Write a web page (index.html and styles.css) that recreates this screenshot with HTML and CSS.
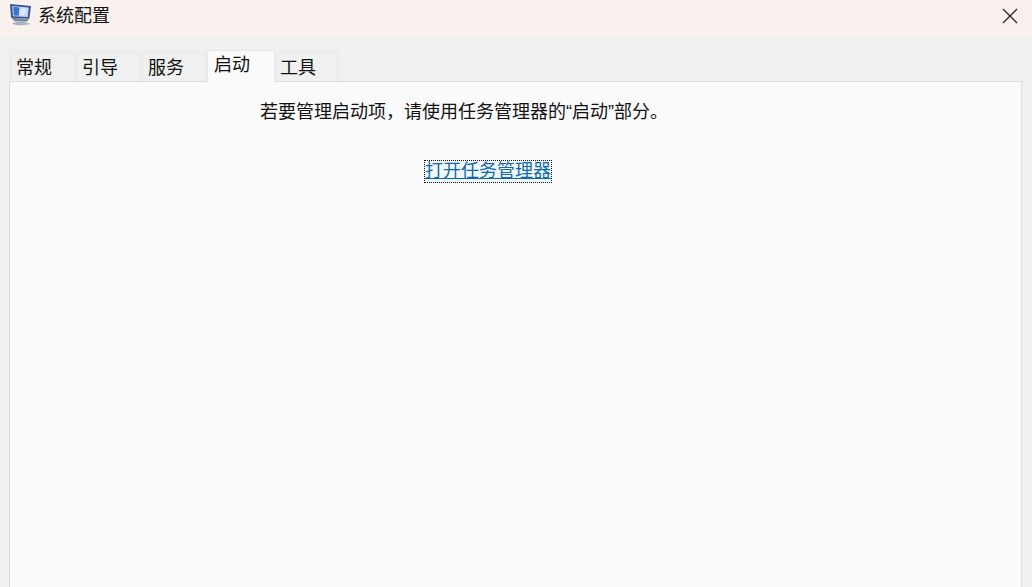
FILE: index.html
```html
<!DOCTYPE html>
<html lang="zh-CN">
<head>
    <meta charset="UTF-8">
    <meta name="viewport" content="width=device-width, initial-scale=1.0">
    <title>系统配置</title>
    <link rel="stylesheet" href="styles.css">
</head>
<body>
    <div class="titlebar">
        <svg class="app-icon" viewBox="3 1 19 23" preserveAspectRatio="none" xmlns="http://www.w3.org/2000/svg">
            <path d="M3 1 22 3 20.5 16.5 4 15.5z" fill="#33509c"/>
            <path d="M5 3 20 4.6 19 14.6 5.6 13.8z" fill="#c4d9f2"/>
            <path d="M6 4 11.5 4.6 10.8 13.2 6.4 13z" fill="#3a74c6"/>
            <path d="M12.8 7.2h4.6M12.6 9.6h4.6M12.4 12h3.4" stroke="#f7fafd" stroke-width="1.2"/>
            <path d="M4 15.5 20.5 16.5 18 19.5 7 19z" fill="#7f899e"/>
            <path d="M5 21C8 19 18 19.5 21 21.5 20 24 5 23.5 5 21z" fill="#aab1bf"/>
        </svg>
        <span class="title">系统配置</span>
        <svg class="close" viewBox="0 0 16 16" xmlns="http://www.w3.org/2000/svg">
            <path d="M1 1 15 15M15 1 1 15" stroke="#222" stroke-width="1.3" fill="none"/>
        </svg>
    </div>
    <div class="tabs">
        <div class="tab">常规</div>
        <div class="tab">引导</div>
        <div class="tab tab-narrow">服务</div>
        <div class="tab active">启动</div>
        <div class="tab tab-last">工具</div>
    </div>
    <div class="panel">
        <p class="message">若要管理启动项，请使用任务管理器的“启动”部分。</p>
        <a class="link" href="#">打开任务管理器</a>
    </div>
</body>
</html>
```

FILE: styles.css
```css
html, body {
    height: 100%;
}
body {
    margin: 0;
    display: flex;
    flex-direction: column;
    overflow: hidden;
    background: #f0f0f0;
    color: #111;
    font-family: "Liberation Sans", "Noto Sans CJK SC", sans-serif;
    font-size: 18px;
}
.titlebar {
    height: 38px;
    flex: none;
    display: flex;
    align-items: center;
    padding: 0 14px 6px 10px;
    box-sizing: border-box;
    background: #f9f1ee;
}
.app-icon {
    width: 21px;
    height: 22px;
    margin: -2px 7px 0 0;
}
.title {
    flex: 1;
    line-height: 24px;
}
.close {
    width: 16px;
    height: 16px;
}
.tabs {
    flex: none;
    display: flex;
    align-items: flex-end;
    gap: 1px;
    height: 43px;
    padding-left: 10px;
    position: relative;
    z-index: 1;
}
.tab {
    box-sizing: border-box;
    width: 65px;
    height: 29px;
    padding-left: 5px;
    line-height: 30px;
    background: #f0f0f0;
    border: 1px solid #e8e8e8;
    border-bottom: none;
}
.tab-narrow {
    width: 64px;
}
.tab-last {
    width: 62px;
    padding-left: 3px;
}
.tab.active {
    width: 68px;
    height: 32px;
    padding-left: 6px;
    line-height: 28px;
    background: #fafafa;
    margin-bottom: -1px;
}
.panel {
    flex: 1;
    margin: 0 10px 0 9px;
    background: #fafafa;
    border: 1px solid #dedede;
    border-bottom: none;
    display: flex;
    flex-direction: column;
    align-items: flex-start;
}
.message {
    margin: 17px 0 0 250px;
    line-height: 26px;
}
.link {
    margin: 36px 0 0 415px;
    height: 21px;
    line-height: 21px;
    color: #1268a4;
    outline: 1px dotted #111;
    background: #f0f8fd;
}
```
